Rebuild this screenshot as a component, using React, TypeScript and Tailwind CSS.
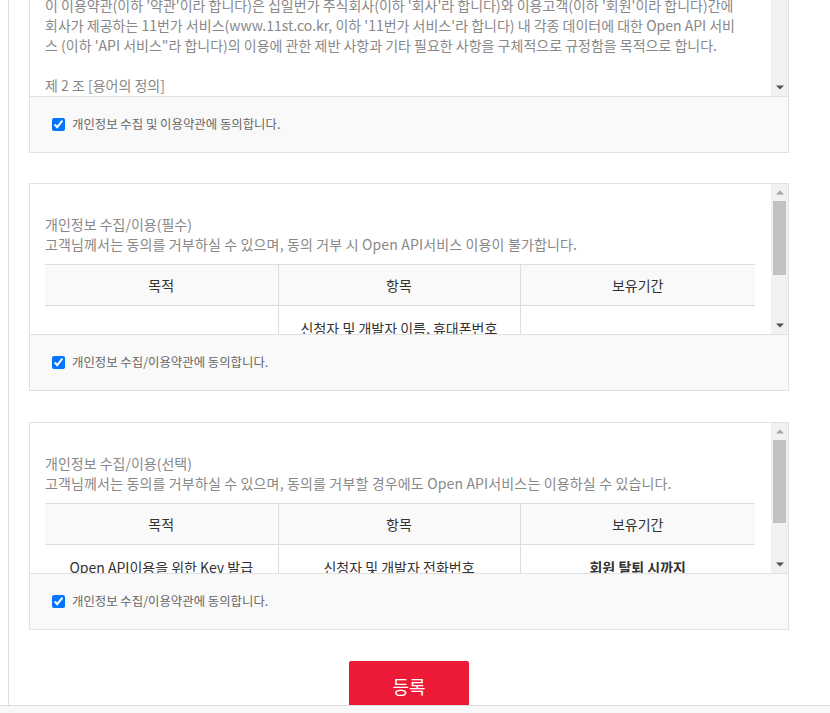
import type { ReactNode } from 'react';

const FONT = { fontFamily: '"Noto Sans CJK KR", "Noto Sans", sans-serif' };

const ArrowUp = ({ dark }: { dark?: boolean }): JSX.Element => (
  <svg width="8" height="5" viewBox="0 0 8 5" className="block">
    <path d="M0 4.5 L4 0.5 L8 4.5 Z" fill={dark ? '#505050' : '#a3a3a3'} />
  </svg>
);

const ArrowDown = ({ dark }: { dark?: boolean }): JSX.Element => (
  <svg width="8" height="5" viewBox="0 0 8 5" className="block">
    <path d="M0 0.5 L8 0.5 L4 4.5 Z" fill={dark ? '#505050' : '#a3a3a3'} />
  </svg>
);

const ScrollBar = ({
  thumb,
  showUp = true,
}: {
  thumb?: number;
  showUp?: boolean;
}): JSX.Element => (
  <div className="flex w-[17px] shrink-0 flex-col bg-[#f1f1f1]">
    {showUp ? (
      <div className="flex h-[17px] items-center justify-center">
        <ArrowUp />
      </div>
    ) : null}
    {thumb ? (
      <div className="px-[2px]">
        <div className="bg-[#c1c1c1]" style={{ height: thumb }} />
      </div>
    ) : null}
    <div className="flex-1" />
    <div className="flex h-[17px] items-center justify-center">
      <ArrowDown dark />
    </div>
  </div>
);

const AgreeFooter = ({ label }: { label: string }): JSX.Element => (
  <label className="flex h-[56px] items-center border-t border-[#e1e1e1] bg-[#f9f9f9] pl-[22px]">
    <input
      type="checkbox"
      checked
      readOnly
      className="m-0 h-[13px] w-[13px] accent-[#0075ff]"
    />
    <span className="ml-[7px] text-[12.4px] text-[#666]">{label}</span>
  </label>
);

const Th = ({ children, last }: { children: ReactNode; last?: boolean }): JSX.Element => (
  <th
    className={`h-[41px] border-b border-[#ddd] bg-[#f9f9f9] text-center text-[14px] font-normal text-[#333] ${
      last ? '' : 'border-r'
    }`}
  >
    {children}
  </th>
);

const Td = ({
  children,
  last,
  bold,
}: {
  children?: ReactNode;
  last?: boolean;
  bold?: boolean;
}): JSX.Element => (
  <td
    className={`border-b border-[#ddd] px-2 py-[12px] text-center align-middle text-[14px] leading-[20px] text-[#333] ${
      last ? '' : 'border-r'
    } ${bold ? 'font-bold' : ''}`}
  >
    {children}
  </td>
);

const PrivacyBox = ({
  title,
  desc,
  thumb,
  rows,
}: {
  title: string;
  desc: string;
  thumb: number;
  rows: ReactNode;
}): JSX.Element => (
  <section className="w-[760px] border border-[#e1e1e1] bg-white">
    <div className="flex h-[150px]">
      <div className="flex-1 overflow-hidden pl-[15px] pr-[16px] pt-[30px]">
        <p className="whitespace-nowrap text-[14px] leading-[20px] text-[#888]">{title}</p>
        <p className="whitespace-nowrap text-[14px] leading-[20px] tracking-[0.15px] text-[#888]">
          {desc}
        </p>
        <table className="mt-[10px] w-full table-fixed border-collapse border-t border-[#ddd]">
          <colgroup>
            <col className="w-[233px]" />
            <col className="w-[242px]" />
            <col />
          </colgroup>
          <thead>
            <tr>
              <Th>목적</Th>
              <Th>항목</Th>
              <Th last>보유기간</Th>
            </tr>
          </thead>
          <tbody>{rows}</tbody>
        </table>
      </div>
      <ScrollBar thumb={thumb} />
    </div>
    <AgreeFooter label="개인정보 수집/이용약관에 동의합니다." />
  </section>
);

export default function App(): JSX.Element {
  return (
    <div className="relative min-h-screen bg-white" style={FONT}>
      <main className="ml-[8px] flex min-h-[713px] w-[810px] flex-col border-l border-[#ddd] pl-[20px]">
        {/* 이용약관 (scrolled into the page, top is out of view) */}
        <section className="w-[760px] border-x border-b border-[#e1e1e1] bg-white">
          <div className="flex h-[96px]">
            <div className="flex-1 overflow-hidden pl-[15px]">
              <div className="-mt-[5px] whitespace-nowrap text-[14px] leading-[20px] text-[#888]">
                <p>
                  이 이용약관(이하 '약관'이라 합니다)은 십일번가 주식회사(이하 '회사'라 합니다)와 이용고객(이하 '회원'이라 합니다)간에
                </p>
                <p>
                  회사가 제공하는 11번가 서비스(www.11st.co.kr, 이하 '11번가 서비스'라 합니다) 내 각종 데이터에 대한 Open API 서비
                </p>
                <p>스 (이하 'API 서비스"라 합니다)의 이용에 관한 제반 사항과 기타 필요한 사항을 구체적으로 규정함을 목적으로 합니다.</p>
                <p className="h-[20px]" />
                <p>제 2 조 [용어의 정의]</p>
              </div>
            </div>
            <ScrollBar showUp={false} />
          </div>
          <AgreeFooter label="개인정보 수집 및 이용약관에 동의합니다." />
        </section>

        <div className="mt-[30px]">
          <PrivacyBox
            title="개인정보 수집/이용(필수)"
            desc="고객님께서는 동의를 거부하실 수 있으며, 동의 거부 시 Open API서비스 이용이 불가합니다."
            thumb={74}
            rows={
              <tr>
                <Td>Open API이용을 위한 Key 발급</Td>
                <Td>
                  신청자 및 개발자 이름, 휴대폰번호
                  <br />
                  이메일, 회사명, 사업자등록번호
                  <br />
                  서비스 URL
                </Td>
                <Td last bold>
                  회원 탈퇴 시까지
                </Td>
              </tr>
            }
          />
        </div>

        <div className="mt-[31px]">
          <PrivacyBox
            title="개인정보 수집/이용(선택)"
            desc="고객님께서는 동의를 거부하실 수 있으며, 동의를 거부할 경우에도 Open API서비스는 이용하실 수 있습니다."
            thumb={83}
            rows={
              <tr>
                <Td>Open API이용을 위한 Key 발급</Td>
                <Td>신청자 및 개발자 전화번호</Td>
                <Td last bold>
                  회원 탈퇴 시까지
                </Td>
              </tr>
            }
          />
        </div>

        <div className="mt-[31px] flex w-[760px] justify-center">
          <button
            type="button"
            className="h-[50px] w-[120px] rounded-t-[2px] bg-[#ec1a36] text-[18px] text-white"
          >
            등록
          </button>
        </div>
      </main>

      <div className="fixed inset-x-0 bottom-0 h-[8px] border-t border-[#ddd] bg-[#f8f8f8]" />
    </div>
  );
}
